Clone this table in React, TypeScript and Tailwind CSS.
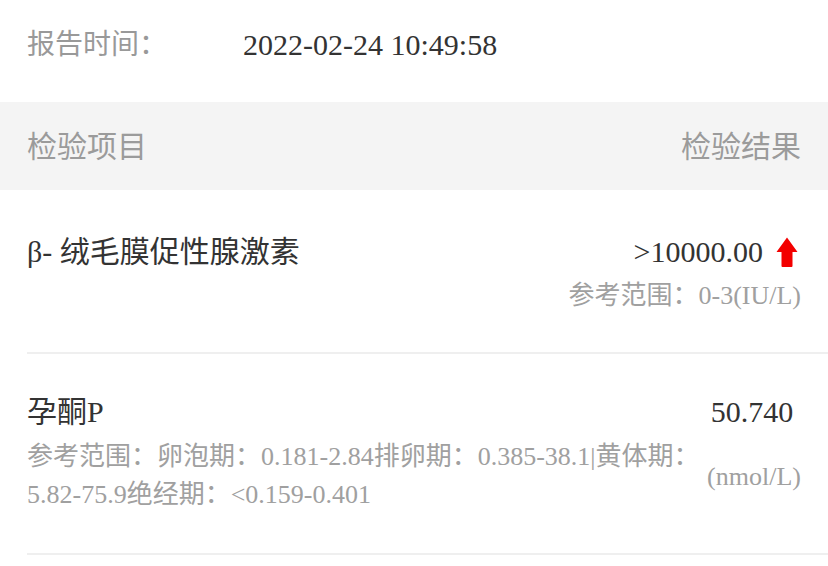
const UpArrow = () => (
  <svg width="22" height="30" viewBox="0 0 22 30" className="ml-[13px] mr-[3px]">
    <path
      d="M11 0.5 L21.5 15 L16.5 15 L16.5 29 Q16.5 30 15.5 30 L6.5 30 Q5.5 30 5.5 29 L5.5 15 L0.5 15 Z"
      fill="#f30000"
    />
  </svg>
);

const results = [
  {
    id: 1,
    name: "β- 绒毛膜促性腺激素",
    value: ">10000.00",
    high: true,
    range: "参考范围：0-3(IU/L)",
  },
];

export default function App() {
  return (
    <div className="w-[828px] h-[566px] overflow-hidden bg-white font-['Liberation_Serif','Noto_Sans_CJK_SC',serif]">
      <div className="h-[102px] flex items-start pt-[25px] px-[27px] leading-[40px]">
        <span className="w-[216px] text-[28px] text-[#999]">报告时间：</span>
        <span className="text-[30px] text-[#333]">2022-02-24 10:49:58</span>
      </div>

      <div className="h-[88px] bg-[#f4f4f4] flex items-center justify-between px-[27px] text-[30px] text-[#9b9b9b]">
        <span>检验项目</span>
        <span>检验结果</span>
      </div>

      <div className="pl-[27px]">
        {results.map((r) => (
          <div key={r.id} className="flex items-start justify-between pr-[27px] pt-[40px] pb-[38px]">
            <div className="text-[30px] leading-[44px] text-[#333]">{r.name}</div>
            <div className="flex flex-col items-end">
              <div className="flex items-center text-[30px] leading-[44px] text-[#333]">
                {r.value}
                {r.high && <UpArrow />}
              </div>
              <div className="mt-[4px] text-[26px] leading-[36px] text-[#a0a0a0]">{r.range}</div>
            </div>
          </div>
        ))}
        <div className="h-[2px] bg-[#efefef]" />

        <div className="flex items-start pr-[27px] pt-[36px] pb-[39px]">
          <div className="w-[680px]">
            <div className="text-[30px] leading-[44px] text-[#333]">孕酮P</div>
            <div className="mt-[4px] text-[26px] leading-[38px] text-[#a0a0a0]">
              参考范围：卵泡期：0.181-2.84排卵期：0.385-38.1|黄体期：5.82-75.9绝经期：&lt;0.159-0.401
            </div>
          </div>
          <div className="flex-1 flex flex-col items-center">
            <div className="text-[30px] leading-[44px] text-[#333] mr-[4px]">50.740</div>
            <div className="mt-[24px] text-[26px] leading-[38px] text-[#a0a0a0]">(nmol/L)</div>
          </div>
        </div>
        <div className="h-[2px] bg-[#efefef]" />
      </div>
    </div>
  );
}
